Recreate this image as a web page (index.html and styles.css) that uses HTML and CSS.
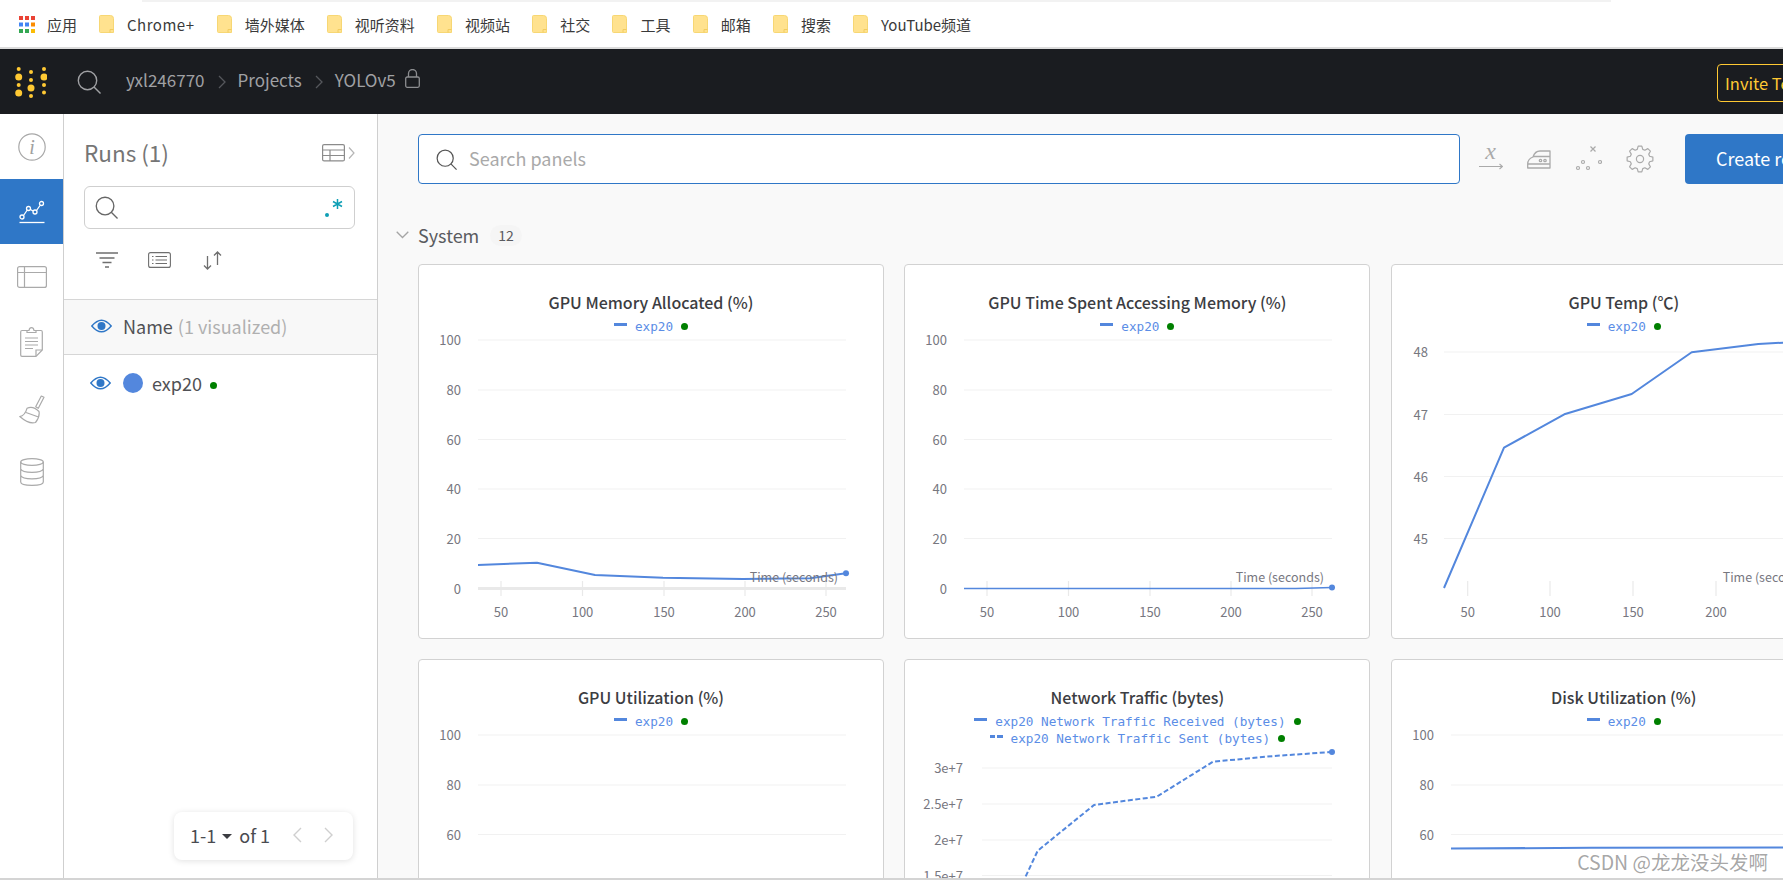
FILE: index.html
```html
<!DOCTYPE html>
<html lang="en">
<head>
<meta charset="utf-8">
<title>YOLOv5 - System</title>
<link rel="stylesheet" href="styles.css">
</head>
<body>
<svg class="defs" width="0" height="0" aria-hidden="true">
  <symbol id="folder" viewBox="0 0 15 18">
    <path d="M1.5 .5H11.5Q14.5 .5 14.5 3.5V17.5H1.5Q.5 17.5 .5 16.5V1.5Q.5 .5 1.5 .5Z" fill="#ffe28f" stroke="#f7d774"/>
    <path d="M11 17.5V14.5H14.5" fill="none" stroke="#f2cc60"/>
  </symbol>
  <symbol id="mag" viewBox="0 0 24 24">
    <circle cx="10.5" cy="10.5" r="9.2" fill="none" stroke="currentColor" stroke-width="1.4"/>
    <path d="M17 17L23.5 23.5" fill="none" stroke="currentColor" stroke-width="1.4"/>
  </symbol>
  <symbol id="eye" viewBox="0 0 21 14">
    <path d="M.8 7Q10.5 -4.5 20.2 7Q10.5 18.500 .8 7Z" fill="none" stroke="#2f77c7" stroke-width="1.4"/>
    <circle cx="10.500" cy="7" r="4" fill="#2f77c7"/>
  </symbol>
  <symbol id="crumb" viewBox="0 0 8 14">
    <path d="M1 1L7 7L1 13" fill="none" stroke="#55575c" stroke-width="1.3"/>
  </symbol>
</svg>

<div class="top-strip"></div>
<nav class="bookmarks">
  <svg class="apps" width="16" height="17" viewBox="0 0 16 17">
    <rect x="0" y="0" width="4" height="4" fill="#ea4335"/><rect x="6" y="0" width="4" height="4" fill="#ea4335"/><rect x="12" y="0" width="4" height="4" fill="#ea4335"/>
    <rect x="0" y="6.500" width="4" height="4" fill="#4285f4"/><rect x="6" y="6.500" width="4" height="4" fill="#4285f4"/><rect x="12" y="6.500" width="4" height="4" fill="#fb8c00"/>
    <rect x="0" y="13" width="4" height="4" fill="#34a853"/><rect x="6" y="13" width="4" height="4" fill="#34a853"/><rect x="12" y="13" width="4" height="4" fill="#fbbc05"/>
  </svg>
  <span class="bm-apps">应用</span>
  <a class="bm"><svg class="folder"><use href="#folder"/></svg><span class="bm-wide">Chrome+</span></a>
  <a class="bm"><svg class="folder"><use href="#folder"/></svg>墙外媒体</a>
  <a class="bm"><svg class="folder"><use href="#folder"/></svg>视听资料</a>
  <a class="bm"><svg class="folder"><use href="#folder"/></svg>视频站</a>
  <a class="bm"><svg class="folder"><use href="#folder"/></svg>社交</a>
  <a class="bm"><svg class="folder"><use href="#folder"/></svg>工具</a>
  <a class="bm"><svg class="folder"><use href="#folder"/></svg>邮箱</a>
  <a class="bm"><svg class="folder"><use href="#folder"/></svg>搜索</a>
  <a class="bm"><svg class="folder"><use href="#folder"/></svg>YouTube频道</a>
</nav>

<header class="appbar">
  <svg class="logo" width="32" height="31" viewBox="0 0 32 31" fill="#ffc933">
    <circle cx="3.700" cy="2" r="2"/><circle cx="3.700" cy="10" r="3.500"/><circle cx="3.700" cy="18" r="2"/><circle cx="3.700" cy="26" r="3.500"/>
    <circle cx="16" cy="5" r="2"/><circle cx="16" cy="13" r="2"/><circle cx="16" cy="21" r="3.500"/><circle cx="16" cy="29" r="2"/>
    <circle cx="29" cy="2" r="2"/><circle cx="29" cy="10" r="3.500"/><circle cx="29" cy="18" r="2"/><circle cx="29" cy="25.500" r="2"/>
  </svg>
  <svg class="appbar-search"><use href="#mag"/></svg>
  <span class="crumb-text">yxl246770</span>
  <svg class="crumb-sep"><use href="#crumb"/></svg>
  <span class="crumb-text">Projects</span>
  <svg class="crumb-sep"><use href="#crumb"/></svg>
  <span class="crumb-text">YOLOv5</span>
  <svg class="lock" width="15" height="19" viewBox="0 0 15 19" fill="none" stroke="#8c8d90" stroke-width="1.300">
    <rect x=".7" y="8" width="13.600" height="10.300" rx="1.500"/>
    <path d="M3.500 8V4.500A4 4 0 0 1 11.500 4.500V8"/>
  </svg>
  <button class="invite">Invite Team</button>
</header>

<div class="workspace">
  <aside class="rail">
    <div class="rail-item">
      <svg width="28" height="28" viewBox="0 0 28 28"><circle cx="14" cy="14" r="13.200" fill="none" stroke="#a8a8a8" stroke-width="1.200"/><text x="14" y="20.500" class="info-i" text-anchor="middle">i</text></svg>
    </div>
    <div class="rail-item is-active">
      <svg width="26" height="24" viewBox="0 0 26 24" fill="none" stroke="#fff" stroke-width="1.300">
        <path d="M4.500 15.500L8.300 10M11.500 9.500L14 11M17.500 10.500L21 5.500"/>
        <circle cx="3" cy="17" r="2"/><circle cx="9.500" cy="8.500" r="2"/><circle cx="16" cy="12" r="2"/><circle cx="22.500" cy="3.500" r="2"/>
        <path d="M.5 22.500H25.500"/>
      </svg>
    </div>
    <div class="rail-item">
      <svg width="30" height="22" viewBox="0 0 30 22" fill="none" stroke="#aaa" stroke-width="1.200"><rect x=".6" y=".6" width="28.800" height="20.800" rx="2"/><path d="M.6 6.500H29.400M7.500 .6V21.400"/></svg>
    </div>
    <div class="rail-item">
      <svg width="23" height="30" viewBox="0 0 23 30" fill="none" stroke="#aaa" stroke-width="1.200"><path d="M7 3.500H2Q.7 3.500 .7 5V28Q.7 29.300 2 29.300H16L22.300 23V5Q22.300 3.500 21 3.500H16"/><path d="M7 5.500V3.500H9Q9.500 .7 11.500 .7T14 3.500H16V5.500H7ZM16 29V23H22M5 11H18M5 14.500H18M5 18H18M5 21.500H13"/></svg>
    </div>
    <div class="rail-item">
      <svg class="broom" width="26" height="32" viewBox="0 0 26 32" fill="none" stroke="#aaa" stroke-width="1.200" stroke-linejoin="round"><path d="M22.300 3L25 4.300L19.300 15.300L16.700 13.700Z"/><path d="M8 15.300Q14 12.500 20 18.500Q21 24 16.500 29.500Q10 31.500 .8 23.500Q6 22.500 8 15.300Z"/><path d="M7 19.500L19.500 24"/></svg>
    </div>
    <div class="rail-item">
      <svg width="24" height="28" viewBox="0 0 24 28" fill="none" stroke="#aaa" stroke-width="1.200"><ellipse cx="12" cy="4" rx="11.300" ry="3.300"/><path d="M.7 4V24Q.7 27.300 12 27.300T23.300 24V4M.7 11Q2 14.300 12 14.300T23.300 11M.7 17.500Q2 20.800 12 20.800T23.300 17.500"/></svg>
    </div>
  </aside>

  <section class="runs">
    <div class="runs-head">
      <h2 class="runs-title">Runs (1)</h2>
      <svg class="runs-expand" width="33" height="18" viewBox="0 0 33 18" fill="none" stroke="#8b8b8b" stroke-width="1.200"><rect x=".6" y=".6" width="21.800" height="16.300" rx="1.500"/><path d="M.6 6H22.400M.6 11.500H22.400M8 6V17" /><path d="M27 3.500L32 9L27 14.500" stroke="#b5b5b5"/></svg>
    </div>
    <div class="runs-search">
      <svg class="runs-mag"><use href="#mag"/></svg>
      <svg class="regex" width="19" height="20" viewBox="0 0 19 20" fill="none" stroke="#0f9fb5" stroke-width="1.500"><circle cx="3" cy="17" r="2" fill="#0f9fb5" stroke="none"/><path d="M13.500 1V11M9 3.500L18 8.500M18 3.500L9 8.500"/></svg>
    </div>
    <div class="runs-tools">
      <svg width="22" height="16" viewBox="0 0 22 16" fill="none" stroke="#6f6f6f" stroke-width="1.300"><path d="M0 1H22M3.500 6H18.500M6.500 10.500H15.500M9 15H13"/></svg>
      <svg width="23" height="16" viewBox="0 0 23 16" fill="none" stroke="#6f6f6f" stroke-width="1.100"><rect x=".6" y=".6" width="21.800" height="14.800" rx="2"/><path d="M4 4.500H5.500M4 8H5.500M4 11.500H5.500M7.500 4.500H19M7.500 8H19M7.500 11.500H19"/></svg>
      <svg width="19" height="19" viewBox="0 0 19 19" fill="none" stroke="#6f6f6f" stroke-width="1.300"><path d="M4.500 5V18M1 14.500L4.500 18L8 14.500M14.500 14V1M11 4.500L14.500 1L18 4.500"/></svg>
    </div>
    <div class="runs-name-row">
      <svg class="eye"><use href="#eye"/></svg>
      <span class="name-label">Name</span>
      <span class="name-note">(1 visualized)</span>
    </div>
    <div class="run-row">
      <svg class="eye"><use href="#eye"/></svg>
      <span class="run-swatch"></span>
      <span class="run-name">exp20</span>
      <span class="run-live"></span>
    </div>
    <div class="pager">
      <span>1-1</span>
      <span class="pager-caret"></span>
      <span class="pager-of">of 1</span>
      <svg class="pager-nav" width="10" height="16" viewBox="0 0 10 16"><path d="M9 1L2 8L9 15" fill="none" stroke="#cfcfcf" stroke-width="1.400"/></svg>
      <svg class="pager-nav" width="10" height="16" viewBox="0 0 10 16"><path d="M1 1L8 8L1 15" fill="none" stroke="#cfcfcf" stroke-width="1.400"/></svg>
    </div>
  </section>

  <main class="main">
    <div class="main-top">
      <div class="panel-search">
        <svg class="panel-mag"><use href="#mag"/></svg>
        <span class="panel-placeholder">Search panels</span>
      </div>
      <div class="main-tools">
        <svg width="24" height="22" viewBox="0 0 24 22" fill="none" stroke="#aaa" stroke-width="1.100"><text x="11.500" y="11" class="tool-x" text-anchor="middle">x</text><path d="M0 18.500H23.500M20.500 16L23.500 18.500L20.500 21"/></svg>
        <svg width="24" height="19" viewBox="0 0 24 19" fill="none" stroke="#aaa" stroke-width="1.300" stroke-linejoin="round"><path d="M23 1H13Q8 1 6 7Q.7 9 .7 14V18H23ZM6.500 6.500H23M.7 14H23"/><circle cx="13.500" cy="10.500" r="1.200"/><circle cx="18" cy="10.500" r="1.200"/></svg>
        <svg width="27" height="26" viewBox="0 0 27 26" fill="none" stroke="#aaa" stroke-width="1.200"><path d="M15.500 .5L20.500 5.500M20.500 .5L15.500 5.500"/><circle cx="3" cy="22" r="1.500"/><circle cx="8" cy="16" r="1.500"/><circle cx="13" cy="22" r="1.500"/><circle cx="25" cy="16" r="1.500"/></svg>
        <svg width="28" height="28" viewBox="0 0 28 28" fill="none" stroke="#aaa" stroke-width="1.200" stroke-linejoin="round"><circle cx="14" cy="14" r="3.600"/><path d="M11.240 4.390L12.190 1.130H15.810L16.760 4.390L18.850 5.250L21.820 3.610L24.390 6.180L22.750 9.150L23.610 11.240L26.870 12.190V15.810L23.610 16.760L22.750 18.850L24.390 21.820L21.820 24.390L18.850 22.750L16.760 23.610L15.810 26.870H12.190L11.240 23.610L9.150 22.750L6.180 24.390L3.610 21.820L5.250 18.850L4.390 16.760L1.130 15.810V12.190L4.390 11.240L5.250 9.150L3.610 6.180L6.180 3.610L9.150 5.250Z"/></svg>
      </div>
      <button class="create">Create report</button>
    </div>

    <div class="section-head">
      <svg width="13" height="8" viewBox="0 0 13 8"><path d="M.7 .7L6.500 6.500L12.300 .7" fill="none" stroke="#a5a5a5" stroke-width="1.300"/></svg>
      <span class="section-name">System</span>
      <span class="section-count">12</span>
    </div>

    <div class="cards">
      <article class="card">
        <div class="card-head">
          <h3 class="card-title">GPU Memory Allocated (%)</h3>
          <div class="legend"><i class="legend-line"></i><span>exp20</span><i class="legend-dot"></i></div>
        </div>
        <svg class="chart" viewBox="1 69 464 304">
          <g class="grid"><path d="M60 76H428M60 126H428M60 175.500H428M60 225H428M60 274.500H428"/></g>
          <path class="axis-band" d="M60 324.500H428"/>
          <g class="ticks"><path d="M83 317V332M164.500 317V332M246 317V332M327 317V332M408 317V332"/></g>
          <g class="ylab"><text x="43" y="76">100</text><text x="43" y="126">80</text><text x="43" y="175.500">60</text><text x="43" y="225">40</text><text x="43" y="274.500">20</text><text x="43" y="324.500">0</text></g>
          <polyline class="series" points="60,301 119,298.700 177,311 245,313.700 325,315 392,314.300 428,309.300"/>
          <circle class="series-end" cx="428" cy="309.300" r="3"/>
          <g class="xlab"><text x="83" y="348">50</text><text x="164.500" y="348">100</text><text x="246" y="348">150</text><text x="327" y="348">200</text><text x="408" y="348">250</text></g>
          <text class="xname" x="420" y="313">Time (seconds)</text>
        </svg>
      </article>

      <article class="card">
        <div class="card-head">
          <h3 class="card-title">GPU Time Spent Accessing Memory (%)</h3>
          <div class="legend"><i class="legend-line"></i><span>exp20</span><i class="legend-dot"></i></div>
        </div>
        <svg class="chart" viewBox="1 69 464 304">
          <g class="grid"><path d="M60 76H428M60 126H428M60 175.500H428M60 225H428M60 274.500H428"/></g>
          <g class="ticks"><path d="M83 317V332M164.500 317V332M246 317V332M327 317V332M408 317V332"/></g>
          <g class="ylab"><text x="43" y="76">100</text><text x="43" y="126">80</text><text x="43" y="175.500">60</text><text x="43" y="225">40</text><text x="43" y="274.500">20</text><text x="43" y="324.500">0</text></g>
          <polyline class="series is-thin" points="60,324.500 392,324.500 428,323.500"/>
          <circle class="series-end" cx="428" cy="323.500" r="3"/>
          <g class="xlab"><text x="83" y="348">50</text><text x="164.500" y="348">100</text><text x="246" y="348">150</text><text x="327" y="348">200</text><text x="408" y="348">250</text></g>
          <text class="xname" x="420" y="313">Time (seconds)</text>
        </svg>
      </article>

      <article class="card">
        <div class="card-head">
          <h3 class="card-title">GPU Temp (℃)</h3>
          <div class="legend"><i class="legend-line"></i><span>exp20</span><i class="legend-dot"></i></div>
        </div>
        <svg class="chart" viewBox="1 69 464 304">
          <g class="grid"><path d="M53 88H428M53 150.500H428M53 212.500H428M53 274.500H428"/></g>
          <g class="ticks"><path d="M76.700 317V332M159 317V332M242 317V332M325 317V332M408 317V332"/></g>
          <g class="ylab"><text x="37" y="88">48</text><text x="37" y="150.500">47</text><text x="37" y="212.500">46</text><text x="37" y="274.500">45</text></g>
          <polyline class="series" points="53,324 113,183.700 173.300,150.300 240.700,130 300.700,88.300 367.300,80 392,78.700 428,78"/>
          <g class="xlab"><text x="76.700" y="348">50</text><text x="159" y="348">100</text><text x="242" y="348">150</text><text x="325" y="348">200</text><text x="408" y="348">250</text></g>
          <text class="xname" x="420" y="313">Time (seconds)</text>
        </svg>
      </article>

      <article class="card">
        <div class="card-head">
          <h3 class="card-title">GPU Utilization (%)</h3>
          <div class="legend"><i class="legend-line"></i><span>exp20</span><i class="legend-dot"></i></div>
        </div>
        <svg class="chart" viewBox="1 69 464 304">
          <g class="grid"><path d="M60 76H428M60 126H428M60 175.500H428"/></g>
          <g class="ylab"><text x="43" y="76">100</text><text x="43" y="126">80</text><text x="43" y="175.500">60</text></g>
        </svg>
      </article>

      <article class="card">
        <div class="card-head">
          <h3 class="card-title">Network Traffic (bytes)</h3>
          <div class="legend"><i class="legend-line"></i><span>exp20 Network Traffic Received (bytes)</span><i class="legend-dot"></i></div>
          <div class="legend"><i class="legend-line is-dashed"></i><span>exp20 Network Traffic Sent (bytes)</span><i class="legend-dot"></i></div>
        </div>
        <svg class="chart" viewBox="1 69 464 304">
          <g class="grid"><path d="M78 109H428M78 145H428M78 181H428M78 216.500H428"/></g>
          <g class="ylab"><text x="59" y="109">3e+7</text><text x="59" y="145">2.5e+7</text><text x="59" y="181">2e+7</text><text x="59" y="216.500">1.5e+7</text></g>
          <polyline class="series is-dashed" points="110,245 120,221 133.700,191.700 190,146 252.700,137.700 309,102.700 370,97 428,93"/>
          <circle class="series-end" cx="428" cy="93" r="3"/>
        </svg>
      </article>

      <article class="card">
        <div class="card-head">
          <h3 class="card-title">Disk Utilization (%)</h3>
          <div class="legend"><i class="legend-line"></i><span>exp20</span><i class="legend-dot"></i></div>
        </div>
        <svg class="chart" viewBox="1 69 464 304">
          <g class="grid"><path d="M60 76H428M60 126H428M60 175.500H428"/></g>
          <g class="ylab"><text x="43" y="76">100</text><text x="43" y="126">80</text><text x="43" y="175.500">60</text></g>
          <polyline class="series" points="60,189.500 200,188.800 428,188.500"/>
        </svg>
      </article>
    </div>
  </main>
</div>
<div class="bottom-line"></div>
<div class="watermark">CSDN @龙龙没头发啊</div>
</body>
</html>
```

FILE: styles.css
```css
* { box-sizing: border-box; }
html, body { margin: 0; padding: 0; height: 880px; overflow: hidden; }
body {
  position: relative;
  display: flex;
  flex-direction: column;
  background: #fff;
  color: #3c3d42;
  font-family: "Noto Sans CJK SC", "Noto Sans", sans-serif;
}
.defs { position: absolute; }
h2, h3 { margin: 0; font-weight: 400; }
button { font-family: inherit; cursor: pointer; }

.top-strip { flex: none; width: 1469px; height: 2px; margin-left: 142px; background: #f2f2f2; }

.bookmarks {
  flex: none;
  display: flex;
  align-items: center;
  height: 47px;
  padding: 0 0 1px 19px;
  border-bottom: 2px solid #dcdcdc;
  font-size: 15px;
  color: #3a3a3a;
  white-space: nowrap;
}
.apps { flex: none; }
.bm-apps { margin-left: 12px; margin-right: 22px; }
.bm { display: flex; align-items: center; margin-right: 22.200px; }
.bm-wide { letter-spacing: .5px; }
.folder { width: 15px; height: 18px; margin-right: 13px; flex: none; }

.appbar {
  flex: none;
  display: flex;
  align-items: center;
  height: 65px;
  padding-left: 15px;
  background: #1a1c20;
  color: #a0a1a4;
  font-size: 17px;
  white-space: nowrap;
}
.logo { flex: none; margin-top: 2px; }
.appbar-search { width: 24px; height: 24px; margin: 0 25px 0 30px; color: #a0a1a4; }
.crumb-text { line-height: 1; margin-bottom: 4px; }
.crumb-sep { width: 8px; height: 14px; margin: 0 12px 0 13px; }
.lock { margin: 0 0 6px 9px; }
.invite {
  height: 38px;
  width: 130px;
  margin: 2px 0 0 auto;
  flex: none;
  position: relative;
  left: 64px;
  padding: 0 0 0 7px;
  text-align: left;
  font-size: 16.500px;
  color: #ffc933;
  background: transparent;
  border: 1px solid #ffc933;
  border-radius: 4px;
}

.workspace { flex: 1; min-height: 0; display: flex; }

.rail { flex: none; width: 64px; border-right: 1px solid #cfcfcf; background: #fff; }
.rail-item { height: 65px; display: flex; align-items: center; justify-content: center; }
.rail-item.is-active { background: #2f77c7; }
.broom { margin-top: 5px; }
.info-i { font: italic 20px "Liberation Serif", serif; fill: #a0a0a0; }
.tool-x { font: italic 24px "Liberation Serif", serif; fill: #aaa; stroke: none; }

.runs {
  position: relative;
  flex: none;
  width: 314px;
  border-right: 1px solid #cfcfcf;
  background: #fff;
}
.runs-head { display: flex; align-items: center; justify-content: space-between; height: 38px; margin: 20px 22px 0 20px; }
.runs-title { font-size: 22.500px; color: #757575; margin-bottom: 2px; }
.runs-search {
  display: flex;
  align-items: center;
  justify-content: space-between;
  height: 43px;
  margin: 14px 22px 0 20px;
  padding: 0 11px 0 10px;
  border: 1px solid #cfcfcf;
  border-radius: 6px;
}
.runs-mag { width: 23px; height: 23px; color: #666; }
.regex { flex: none; }
.runs-tools { display: flex; align-items: flex-start; gap: 30px; height: 70px; padding: 23px 0 0 32px; }
.runs-tools svg:last-child { margin: -1px 0 0 2px; }
.runs-name-row {
  display: flex;
  align-items: center;
  height: 56px;
  padding: 0 0 2px 27px;
  background: #f8f8f8;
  border-top: 1px solid #d6d6d6;
  border-bottom: 1px solid #d6d6d6;
  font-size: 18px;
}
.eye { width: 21px; height: 14px; flex: none; }
.runs-name-row .eye { margin: 0 11px 0 0; }
.name-label { color: #505155; }
.name-note { margin-left: 5px; color: #b0b0b0; }
.run-row { display: flex; align-items: center; height: 58px; padding: 0 0 2px 26px; font-size: 18px; }
.run-row .eye { margin: 0 12px 0 0; }
.run-swatch { width: 20px; height: 20px; border-radius: 50%; background: #5387dd; }
.run-name { margin-left: 9px; color: #505155; }
.run-live { width: 7px; height: 7px; margin: 5px 0 0 8px; border-radius: 50%; background: #008000; }

.pager {
  position: absolute;
  right: 24px;
  bottom: 18px;
  display: flex;
  align-items: center;
  width: 179px;
  height: 48px;
  padding: 0 0 2px 16px;
  background: #fff;
  border-radius: 8px;
  box-shadow: 0 1px 6px rgba(0, 0, 0, .12);
  font-size: 18px;
  color: #4a4b50;
}
.pager-caret { width: 0; height: 0; margin: 2px 7px 0 6px; border: 5px solid transparent; border-top: 5px solid #3c3d42; border-bottom: 0; }
.pager-nav { margin-left: 22px; }

.main { flex: 1; min-width: 0; overflow: hidden; background: #f9f9f9; }
.main-top { display: flex; align-items: center; height: 50px; margin-top: 20px; padding-left: 40px; }
.panel-search {
  flex: none;
  display: flex;
  align-items: center;
  width: 1042px;
  height: 50px;
  padding: 0 0 2px 17px;
  background: #fff;
  border: 1px solid #2f77c7;
  border-radius: 4px;
}
.panel-mag { width: 21px; height: 21px; color: #555; margin: 2px 12px 0 0; }
.panel-placeholder { font-size: 18px; color: #a9a9a9; }
.main-tools { flex: none; display: flex; align-items: center; gap: 24px; margin-left: 19px; }
.create {
  flex: none;
  width: 170px;
  height: 50px;
  margin-left: 31px;
  padding: 0 0 2px 31px;
  text-align: left;
  font-size: 18px;
  color: #fff;
  background: #2f77c7;
  border: 0;
  border-radius: 4px;
}

.section-head { display: flex; align-items: center; height: 34px; margin-top: 34px; padding-left: 18px; }
.section-name { margin-left: 9px; font-size: 18px; color: #5a5b60; }
.section-count { margin-left: 11px; padding: 0 8px; height: 21px; line-height: 21px; font-size: 14px; color: #5a5b60; background: #f5f5f5; border-radius: 11px; }

.cards { display: grid; grid-template-columns: repeat(3, 466px); grid-auto-rows: 375px; gap: 20px 20.400px; width: 1500px; margin-top: 12px; padding-left: 40px; }
.card { background: #fff; border: 1px solid #d2d2d2; border-radius: 4px; overflow: hidden; }
.card-head { height: 68px; padding-top: 24px; }
.card-title { height: 26px; line-height: 26px; text-align: center; font-size: 16px; font-weight: 500; color: #3c3d42; }
.legend {
  display: flex;
  align-items: center;
  justify-content: center;
  height: 17px;
  margin-top: 3px;
  font: 12.700px/17px "DejaVu Sans Mono", monospace;
  color: #5b8de6;
  white-space: nowrap;
}
.legend + .legend { margin-top: 0; }
.legend-line { width: 13px; height: 3px; margin: -5px 8px 0 0; background: #5387dd; }
.legend-line.is-dashed { background: repeating-linear-gradient(90deg, #5387dd 0 5.500px, transparent 5.500px 7.500px); }
.legend-dot { width: 7px; height: 7px; margin-left: 8px; border-radius: 50%; background: #008000; }

.chart { display: block; width: 464px; height: 304px; overflow: hidden; }
.grid path { fill: none; stroke: #f1f1f1; stroke-width: 1.200; }
.ticks path { fill: none; stroke: #e9e9e9; stroke-width: 1.200; }
.axis-band { fill: none; stroke: #e9e9e9; stroke-width: 3; }
.ylab, .xlab { transform: translateY(-.5px); }
.xname { transform: translateY(-1px); }
.ylab text { font-size: 13px; fill: #77777f; text-anchor: end; dominant-baseline: central; }
.xlab text { font-size: 13px; fill: #77777f; text-anchor: middle; dominant-baseline: central; }
.xname { font-size: 12.500px; fill: #77777f; text-anchor: end; dominant-baseline: central; }
.series { fill: none; stroke: #5387dd; stroke-width: 2; stroke-linejoin: round; }
.series.is-thin { stroke-width: 1.500; }
.series.is-dashed { stroke-dasharray: 5 2.500; }
.series-end { fill: #5387dd; }

.bottom-line { flex: none; height: 2px; background: #d4d4d4; }
.watermark {
  position: absolute;
  right: 15px;
  bottom: 5px;
  font-size: 19.500px;
  line-height: 26px;
  color: rgba(110, 110, 110, .62);
  white-space: nowrap;
}
```
